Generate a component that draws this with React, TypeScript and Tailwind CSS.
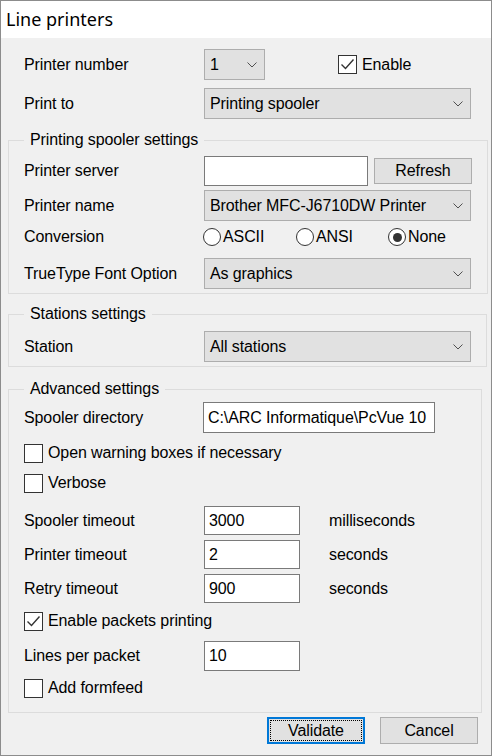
import type { ReactNode } from "react";

const sans = "font-['Liberation_Sans',Arial,sans-serif]";

function Chevron() {
    return (
        <svg width="10" height="6" viewBox="0 0 10 6" className="shrink-0">
            <path d="M0.5 0.5 L5 5 L9.5 0.5" fill="none" stroke="#505050" strokeWidth="1" />
        </svg>
    );
}

function Select({ value, className = "" }: { value: string; className?: string }) {
    return (
        <div
            className={`h-[31px] bg-[#e1e1e1] border border-[#adadad] flex items-center justify-between pl-[5px] pr-[7px] ${className}`}
        >
            <span className="whitespace-nowrap">{value}</span>
            <Chevron />
        </div>
    );
}

function TextBox({ value = "", className = "" }: { value?: string; className?: string }) {
    return (
        <div
            className={`bg-white border border-[#7a7a7a] flex items-center pl-[4px] overflow-hidden whitespace-nowrap ${className}`}
        >
            {value}
        </div>
    );
}

function CheckBox({ label, checked = false }: { label: string; checked?: boolean }) {
    return (
        <div className="h-[20px] flex items-center gap-[5px]">
            <div className="w-[19px] h-[19px] border border-[#333] bg-white flex items-center justify-center">
                {checked && (
                    <svg width="15" height="13" viewBox="0 0 15 13">
                        <path d="M1.5 6.5 L5.5 10.5 L13.5 1.5" fill="none" stroke="#333" strokeWidth="1.4" />
                    </svg>
                )}
            </div>
            <span>{label}</span>
        </div>
    );
}

function Radio({ label, checked = false, className = "" }: { label: string; checked?: boolean; className?: string }) {
    return (
        <div className={`flex items-center gap-[2px] ${className}`}>
            <div className="w-[18px] h-[18px] rounded-full border border-[#333] bg-white flex items-center justify-center">
                {checked && <div className="w-[9px] h-[9px] rounded-full bg-[#333]" />}
            </div>
            <span>{label}</span>
        </div>
    );
}

function Row({ label, children, className = "" }: { label: string; children: ReactNode; className?: string }) {
    return (
        <div className={`flex items-center ${className}`}>
            <span className="w-[180px] shrink-0">{label}</span>
            {children}
        </div>
    );
}

function Group({ title, children, className = "" }: { title: string; children: ReactNode; className?: string }) {
    return (
        <fieldset className={`w-[474px] border border-[#dcdcdc] px-[15px] ${className}`}>
            <legend className="px-[6px] leading-[18px]">{title}</legend>
            {children}
        </fieldset>
    );
}

export default function App() {
    return (
        <div
            className={`w-[492px] h-[756px] border border-[#8c8c8c] bg-[#f0f0f0] flex flex-col text-[16px] tracking-[-0.1px] text-black ${sans}`}
        >
            {/* title bar */}
            <div className="h-[37px] bg-white flex items-center pl-[5px] text-[18px] tracking-normal font-['Noto_Sans',sans-serif]">
                Line printers
            </div>

            <div className="pl-[7px] flex flex-col">
                <div className="pl-[16px]">
                    <Row label="Printer number" className="mt-[11px]">
                        <Select value="1" className="w-[61px]" />
                        <div className="ml-[73px]">
                            <CheckBox label="Enable" checked />
                        </div>
                    </Row>
                    <Row label="Print to" className="mt-[8px]">
                        <Select value="Printing spooler" className="w-[267px]" />
                    </Row>
                </div>

                <Group title="Printing spooler settings" className="mt-[12px] pb-[4px]">
                    <Row label="Printer server" className="mt-[7px] h-[30px]">
                        <TextBox className="w-[164px] h-[30px]" />
                        <button className="ml-[6px] w-[98px] h-[26px] bg-[#e1e1e1] border border-[#adadad]">
                            Refresh
                        </button>
                    </Row>
                    <Row label="Printer name" className="mt-[4px]">
                        <Select value="Brother MFC-J6710DW Printer" className="w-[267px]" />
                    </Row>
                    <Row label="Conversion" className="mt-[5px] h-[22px]">
                        <Radio label="ASCII" className="w-[93px] -ml-[1px]" />
                        <Radio label="ANSI" className="w-[92px]" />
                        <Radio label="None" checked />
                    </Row>
                    <Row label="TrueType Font Option" className="mt-[10px]">
                        <Select value="As graphics" className="w-[267px]" />
                    </Row>
                </Group>

                <Group title="Stations settings" className="mt-[11px] pb-[4px]">
                    <Row label="Station" className="mt-[8px]">
                        <Select value="All stations" className="w-[267px]" />
                    </Row>
                </Group>

                <Group title="Advanced settings" className="mt-[13px] pb-[14px]">
                    <Row label="Spooler directory" className="mt-[4px]">
                        <TextBox value="C:\ARC Informatique\PcVue 10" className="w-[232px] h-[31px] -ml-[1px]" />
                    </Row>
                    <div className="mt-[10px]">
                        <CheckBox label="Open warning boxes if necessary" />
                    </div>
                    <div className="mt-[10px]">
                        <CheckBox label="Verbose" />
                    </div>
                    <Row label="Spooler timeout" className="mt-[13px]">
                        <TextBox value="3000" className="w-[96px] h-[29px]" />
                        <span className="ml-[29px]">milliseconds</span>
                    </Row>
                    <Row label="Printer timeout" className="mt-[5px]">
                        <TextBox value="2" className="w-[96px] h-[29px]" />
                        <span className="ml-[29px]">seconds</span>
                    </Row>
                    <Row label="Retry timeout" className="mt-[5px]">
                        <TextBox value="900" className="w-[96px] h-[29px]" />
                        <span className="ml-[29px]">seconds</span>
                    </Row>
                    <div className="mt-[8px]">
                        <CheckBox label="Enable packets printing" checked />
                    </div>
                    <Row label="Lines per packet" className="mt-[10px]">
                        <TextBox value="10" className="w-[96px] h-[30px]" />
                    </Row>
                    <div className="mt-[7px]">
                        <CheckBox label="Add formfeed" />
                    </div>
                </Group>

                <div className="mt-[4px] flex justify-end gap-[15px] pr-[13px]">
                    <button className="w-[98px] h-[27px] bg-[#e1e1e1] border-2 border-[#0078d7] p-[1px]">
                        <div className="w-full h-full border border-dotted border-black flex items-center justify-center">
                            Validate
                        </div>
                    </button>
                    <button className="w-[98px] h-[27px] bg-[#e1e1e1] border border-[#adadad]">Cancel</button>
                </div>
            </div>
        </div>
    );
}
